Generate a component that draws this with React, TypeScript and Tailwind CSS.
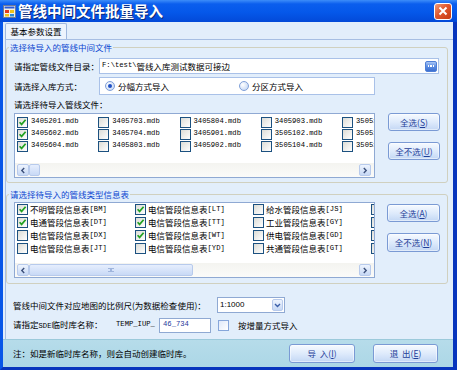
import React from "react";

const MONO = "font-['Liberation_Mono',monospace] text-[7.2px]";

function Check({ checked }: { checked?: boolean }) {
  return (
    <span className="inline-flex w-[11px] h-[11px] shrink-0 border border-[#1c5180] bg-[linear-gradient(135deg,#dcdcd6,#ffffff)] items-center justify-center">
      {checked && (
        <svg width="9" height="9" viewBox="0 0 9 9">
          <path d="M1.6 4.2 L3.6 6.4 L7.6 1.8" stroke="#21a121" strokeWidth="1.7" fill="none" />
        </svg>
      )}
    </span>
  );
}

function Radio({ on }: { on?: boolean }) {
  return (
    <span className="inline-flex w-[10px] h-[10px] shrink-0 rounded-full border border-[#7f9fd8] bg-[radial-gradient(circle_at_35%_35%,#ffffff,#b9cff2)] items-center justify-center">
      {on && <span className="w-[4px] h-[4px] rounded-full bg-[#1e4fc4]" />}
    </span>
  );
}

function Btn({ children, w, h }: { children: React.ReactNode; w: string; h: string }) {
  return (
    <div
      className={`${w} ${h} flex items-center justify-center rounded-[3px] border border-[#7a9ad4] bg-[linear-gradient(to_bottom,#f6faff,#dce9fb_55%,#c3d7f4)] text-[#1f3f99] shadow-[inset_0_0_0_1px_#ffffff80]`}
    >
      {children}
    </div>
  );
}

function Arrow({ dir }: { dir: "left" | "right" }) {
  return (
    <div className="w-[12px] h-[12px] shrink-0 rounded-[2px] border border-[#b7caec] bg-[linear-gradient(to_bottom,#eef4fe,#c6d8f5)] flex items-center justify-center">
      <svg width="6" height="7" viewBox="0 0 6 7">
        {dir === "left" ? (
          <path d="M4.2 1 L1.8 3.5 L4.2 6" stroke="#3b4f7a" strokeWidth="1.4" fill="none" />
        ) : (
          <path d="M1.8 1 L4.2 3.5 L1.8 6" stroke="#3b4f7a" strokeWidth="1.4" fill="none" />
        )}
      </svg>
    </div>
  );
}

function HScroll({ thumb, grip }: { thumb: string; grip?: boolean }) {
  return (
    <div className="h-[14px] flex items-center pl-[2px] pr-[3px] bg-[linear-gradient(to_bottom,#f4f4f0,#fbfbf9)]">
      <Arrow dir="left" />
      <div className="flex-1 h-[12px] flex">
        <div
          className={`${thumb} h-[12px] rounded-[2px] border border-[#b7caec] bg-[linear-gradient(to_bottom,#e6eefd,#c8d9f6)] flex items-center justify-center`}
        >
          {grip && (
            <div className="w-[6px] h-[4px] border-y border-[#9fb5dd] flex justify-center">
              <div className="w-[2px] border-x border-[#9fb5dd]" />
            </div>
          )}
        </div>
      </div>
      <Arrow dir="right" />
    </div>
  );
}

const files: [string, boolean][][] = [
  [["3405201.mdb", true], ["3405602.mdb", true], ["3405604.mdb", true]],
  [["3405703.mdb", false], ["3405704.mdb", false], ["3405803.mdb", false]],
  [["3405804.mdb", false], ["3405901.mdb", false], ["3405902.mdb", false]],
  [["3405903.mdb", false], ["3505102.mdb", false], ["3505104.mdb", false]],
  [["3505105.mdb", false], ["3505106.mdb", false], ["3505107.mdb", false]],
];

const tables: [string, string, boolean][][] = [
  [
    ["不明管段信息表", "[BM]", true],
    ["电通管段信息表", "[DT]", true],
    ["电信管段信息表", "[DX]", false],
    ["电信管段信息表", "[JT]", false],
  ],
  [
    ["电信管段信息表", "[LT]", true],
    ["电信管段信息表", "[TT]", true],
    ["电信管段信息表", "[WT]", true],
    ["电信管段信息表", "[YD]", false],
  ],
  [
    ["给水管段信息表", "[JS]", false],
    ["工业管段信息表", "[GY]", false],
    ["供电管段信息表", "[GD]", false],
    ["共通管段信息表", "[GT]", false],
  ],
  [
    ["燃气管段信息表", "[RQ]", false],
    ["热力管段信息表", "[RL]", false],
    ["雨水管段信息表", "[YS]", false],
    ["污水管段信息表", "[WS]", false],
  ],
];

function TitleBar() {
  return (
    <div className="h-[22px] shrink-0 flex items-center bg-[linear-gradient(to_bottom,#3d8df9_0%,#0b5eee_18%,#0558ea_55%,#0349d8_100%)]">
      <div className="ml-[3px] w-[13px] h-[13px]">
        <svg width="13" height="13" viewBox="0 0 13 13">
          <rect x="0.5" y="0.5" width="12" height="12" fill="#f3f0e6" stroke="#6d7b9a" />
          <rect x="1.5" y="1.5" width="10" height="2" fill="#2a5ad8" />
          <rect x="2" y="5" width="4" height="3" fill="#e03a1e" />
          <rect x="7" y="5" width="4" height="3" fill="#f2c318" />
          <rect x="2" y="9" width="4" height="2.5" fill="#f2c318" />
          <rect x="7" y="9" width="4" height="2.5" fill="#2a8ad8" />
        </svg>
      </div>
      <span className="ml-[2px] text-white font-bold text-[14.5px] leading-none [text-shadow:1px_1px_0_#0a2a7a]">
        管线中间文件批量导入
      </span>
      <div className="ml-auto mr-[5px] w-[18px] h-[17px] rounded-[3px] border border-white bg-[linear-gradient(135deg,#f09a78,#e0582e_45%,#c63a12)] flex items-center justify-center">
        <svg width="10" height="10" viewBox="0 0 10 10">
          <path d="M1.5 1.5 L8.5 8.5 M8.5 1.5 L1.5 8.5" stroke="#ffffff" strokeWidth="2" />
        </svg>
      </div>
    </div>
  );
}

export default function App() {
  return (
    <div className="w-[457px] h-[370px] flex flex-col bg-[#0a4ad8] overflow-hidden font-['Noto_Sans_CJK_SC',sans-serif] text-[8.5px] leading-none text-black">
      <TitleBar />
      <div className="flex-1 flex flex-col border-l-[3px] border-l-[#0756e8] border-r-[4px] border-r-[#0735bd] border-b-[3px] border-b-[#0735bd] bg-[#e2eefb]">
        <div className="flex-1 flex flex-col">
          <div className="pt-[1px] pl-[2px] flex">
            <div className="h-[16px] w-[62px] border border-b-0 border-[#9fb8de] rounded-t-[2px] bg-[#edf4fd] flex items-center justify-center">
              基本参数设置
            </div>
          </div>
          <div className="ml-[2px] flex-1 border-t border-l border-[#a6bee3]">
            {/* group 1 */}
            <fieldset className="mt-[2px] w-[442px] border border-[#d0d0bf] rounded-[3px]">
              <legend className="ml-[2px] px-[1px] leading-[10px] text-[#0b46d0]">选择待导入的管线中间文件</legend>
              <div className="pl-[7px] pt-[6px] pb-[4px] flex flex-col">
                <div className="flex items-center h-[16px]">
                  <div className="w-[85px]">请指定管线文件目录：</div>
                  <div className="w-[340px] h-[16px] border border-[#a9c1e8] bg-white flex items-center pl-[2px] pr-[1px]">
                    <span className={MONO}>F:\test\</span>
                    <span>管线入库测试数据可接边</span>
                    <div className="ml-auto w-[12px] h-[11px] rounded-[2px] border border-[#4f7fd6] bg-[linear-gradient(to_bottom,#a8c6f6,#5d8ee3_50%,#3c6fd0)] flex items-center justify-center gap-[1px]">
                      <span className="w-[1.5px] h-[1.5px] bg-white" />
                      <span className="w-[1.5px] h-[1.5px] bg-white" />
                      <span className="w-[1.5px] h-[1.5px] bg-white" />
                    </div>
                  </div>
                </div>
                <div className="mt-[3px] flex items-center h-[18px]">
                  <div className="w-[85px]">请选择入库方式：</div>
                  <div className="w-[276px] h-[18px] border border-[#a9c1e8] bg-white flex items-center pl-[5px]">
                    <div className="w-[134px] flex items-center">
                      <Radio on />
                      <span className="ml-[3px]">分幅方式导入</span>
                    </div>
                    <div className="flex items-center">
                      <Radio />
                      <span className="ml-[3px]">分区方式导入</span>
                    </div>
                  </div>
                </div>
                <div className="mt-[4px] h-[10px] flex items-center">请选择待导入管线文件：</div>
                <div className="mt-[4px] flex">
                  <div className="w-[361px] h-[65px] border border-[#8fa9d3] bg-white flex flex-col">
                    <div className="flex-1 overflow-hidden flex pl-[2px] pt-[2px]">
                      {files.map((col, ci) => (
                        <div key={ci} className="w-[81.25px] shrink-0 flex flex-col">
                          {col.map(([name, c]) => (
                            <div key={name} className="h-[12px] flex items-center whitespace-nowrap">
                              <Check checked={c} />
                              <span className={`ml-[3px] ${MONO}`}>{name}</span>
                            </div>
                          ))}
                        </div>
                      ))}
                    </div>
                    <HScroll thumb="w-[11px]" />
                  </div>
                  <div className="ml-[13px] flex flex-col">
                    <Btn w="w-[52px]" h="h-[18px]">
                      全选(<span className="underline">S</span>)
                    </Btn>
                    <div className="mt-[11px]">
                      <Btn w="w-[52px]" h="h-[18px]">
                        全不选(<span className="underline">U</span>)
                      </Btn>
                    </div>
                  </div>
                </div>
              </div>
            </fieldset>

            {/* group 2 */}
            <fieldset className="mt-[6px] w-[442px] border border-[#d0d0bf] rounded-[3px]">
              <legend className="ml-[2px] px-[1px] leading-[10px] text-[#0b46d0]">请选择待导入的管线类型信息表</legend>
              <div className="pl-[7px] pt-[3px] pb-[5px] flex">
                <div className="w-[361px] h-[76px] border border-[#8fa9d3] bg-white flex flex-col">
                  <div className="flex-1 overflow-hidden flex pl-[2px]">
                    {tables.map((col, ci) => (
                      <div key={ci} className="w-[118px] shrink-0 flex flex-col">
                        {col.map(([n, code, c]) => (
                          <div key={n + code} className="h-[13px] flex items-center whitespace-nowrap">
                            <Check checked={c} />
                            <span className="ml-[2px]">{n}</span>
                            <span className={MONO}>{code}</span>
                          </div>
                        ))}
                      </div>
                    ))}
                  </div>
                  <HScroll thumb="w-[164px]" grip />
                </div>
                <div className="ml-[12px] pt-[2px] flex flex-col">
                  <Btn w="w-[53px]" h="h-[18px]">
                    全选(<span className="underline">A</span>)
                  </Btn>
                  <div className="mt-[11px]">
                    <Btn w="w-[53px]" h="h-[19px]">
                      全不选(<span className="underline">N</span>)
                    </Btn>
                  </div>
                </div>
              </div>
            </fieldset>

            {/* bottom fields */}
            <div className="pl-[7px] mt-[13px] flex flex-col">
              <div className="flex items-center h-[16px]">
                <div className="w-[204px] whitespace-nowrap">管线中间文件对应地图的比例尺(为数据检查使用)：</div>
                <div className="w-[68px] h-[16px] border border-[#8fa9d3] bg-white flex items-center pl-[2px] pr-[1px]">
                  <span className="font-['Liberation_Sans',sans-serif] text-[8px]">1:1000</span>
                  <div className="ml-auto w-[11px] h-[12px] rounded-[2px] border border-[#b7caec] bg-[linear-gradient(to_bottom,#eef4fe,#c6d8f5)] flex items-center justify-center">
                    <svg width="7" height="5" viewBox="0 0 7 5">
                      <path d="M1 1 L3.5 3.5 L6 1" stroke="#3b5fa8" strokeWidth="1.4" fill="none" />
                    </svg>
                  </div>
                </div>
              </div>
              <div className="mt-[4px] flex items-center h-[16px]">
                <div className="w-[103px] whitespace-nowrap">
                  请指定<span className={MONO}>SDE</span>临时库名称：
                </div>
                <div className={`w-[43px] ${MONO}`}>TEMP_IUP_</div>
                <div className="w-[52px] h-[15px] border border-[#8fa9d3] bg-white flex items-center pl-[3px]">
                  <span className={`${MONO} text-[#1f3a9c]`}>46_734</span>
                </div>
                <div className="ml-[7px] w-[11px] h-[11px] border border-[#86a6da] bg-[linear-gradient(135deg,#dfe9f9,#ffffff)]" />
                <span className="ml-[9px]">按增量方式导入</span>
              </div>
            </div>
          </div>
        </div>
        {/* bottom bar */}
        <div className="h-[28px] shrink-0 flex items-center pl-[10px] pr-[15px] bg-[linear-gradient(to_bottom,#b6dcea,#acd7e6)] border-t border-[#9ccadb]">
          <span>注：如是新临时库名称，则会自动创建临时库。</span>
          <div className="ml-auto flex items-center">
            <Btn w="w-[66px]" h="h-[19px]">
              导&nbsp;&nbsp;入(<span className="underline">I</span>)
            </Btn>
            <div className="ml-[18px]">
              <Btn w="w-[65px]" h="h-[19px]">
                退&nbsp;&nbsp;出(<span className="underline">E</span>)
              </Btn>
            </div>
          </div>
        </div>
      </div>
    </div>
  );
}
